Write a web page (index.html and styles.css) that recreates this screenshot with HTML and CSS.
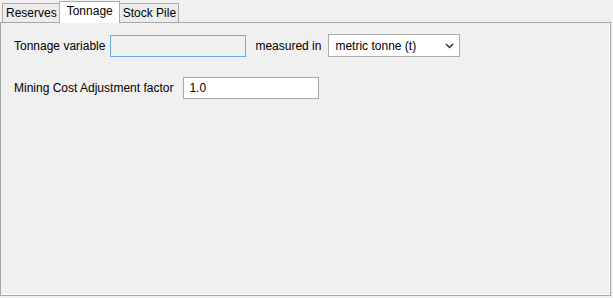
FILE: index.html
```html
<!DOCTYPE html>
<html lang="en">
<head>
    <meta charset="UTF-8">
    <title>Tonnage</title>
    <link rel="stylesheet" href="styles.css">
</head>
<body>
    <div class="tabs">
        <div class="tab">Reserves</div>
        <div class="tab active">Tonnage</div>
        <div class="tab">Stock Pile</div>
    </div>

    <div class="panel">
        <div class="row">
            <span class="label">Tonnage variable</span>
            <div class="field disabled"></div>
            <span class="label measured">measured in</span>
            <div class="combo">
                <span>metric tonne (t)</span>
                <svg class="chevron" width="9" height="6" viewBox="0 0 9 6">
                    <path d="M1 1 L4.5 4.5 L8 1" fill="none" stroke="#333" stroke-width="1.5"/>
                </svg>
            </div>
        </div>
        <div class="row second">
            <span class="label">Mining Cost Adjustment factor</span>
            <div class="field">1.0</div>
        </div>
    </div>
</body>
</html>
```

FILE: styles.css
```css
body {
    margin: 0;
    background-color: #f0f0f0;
    font-family: "Liberation Sans", Arial, sans-serif;
    font-size: 12px;
    color: #000;
    width: 613px;
    height: 298px;
}

.tabs {
    display: flex;
    align-items: flex-end;
    height: 22px;
    padding-left: 2px;
}

.tab {
    height: 19px;
    line-height: 19px;
    padding: 0 2px 0 3px;
    border: 1px solid #acacac;
    border-bottom: none;
    background-color: #ececec;
    box-sizing: border-box;
}

.tab + .tab {
    border-left: none;
}

.tab.active {
    height: 22px;
    line-height: 19px;
    padding: 0 6px 0 7px;
    background-color: #fff;
    border-left: 1px solid #acacac;
    margin-left: -1px;
    margin-bottom: -1px;
    position: relative;
}

.panel {
    width: 611px;
    height: 274px;
    box-sizing: border-box;
    border: 1px solid #a7a7a7;
    box-shadow: inset -1px -1px 0 #fff;
    padding: 11px 0 0 13px;
}

.row {
    display: flex;
    align-items: center;
    height: 23px;
}

.row.second {
    margin-top: 20px;
    height: 22px;
}

.label {
    margin-right: 5px;
}

.measured {
    margin-left: 9px;
    margin-right: 7px;
}

.field {
    width: 136px;
    height: 22px;
    box-sizing: border-box;
    border: 1px solid #a9a9a9;
    background-color: #fff;
    padding: 2px 5px;
    line-height: 16px;
}

.row.second .label {
    margin-right: 10px;
}

.field.disabled {
    border-color: #6fa8e6;
    background-color: #f0f0f0;
}

.combo {
    width: 132px;
    height: 23px;
    box-sizing: border-box;
    border: 1px solid #acacac;
    background-color: #fff;
    display: flex;
    align-items: center;
    justify-content: space-between;
    padding: 0 5px 0 6px;
}

.chevron {
    display: block;
}
```
